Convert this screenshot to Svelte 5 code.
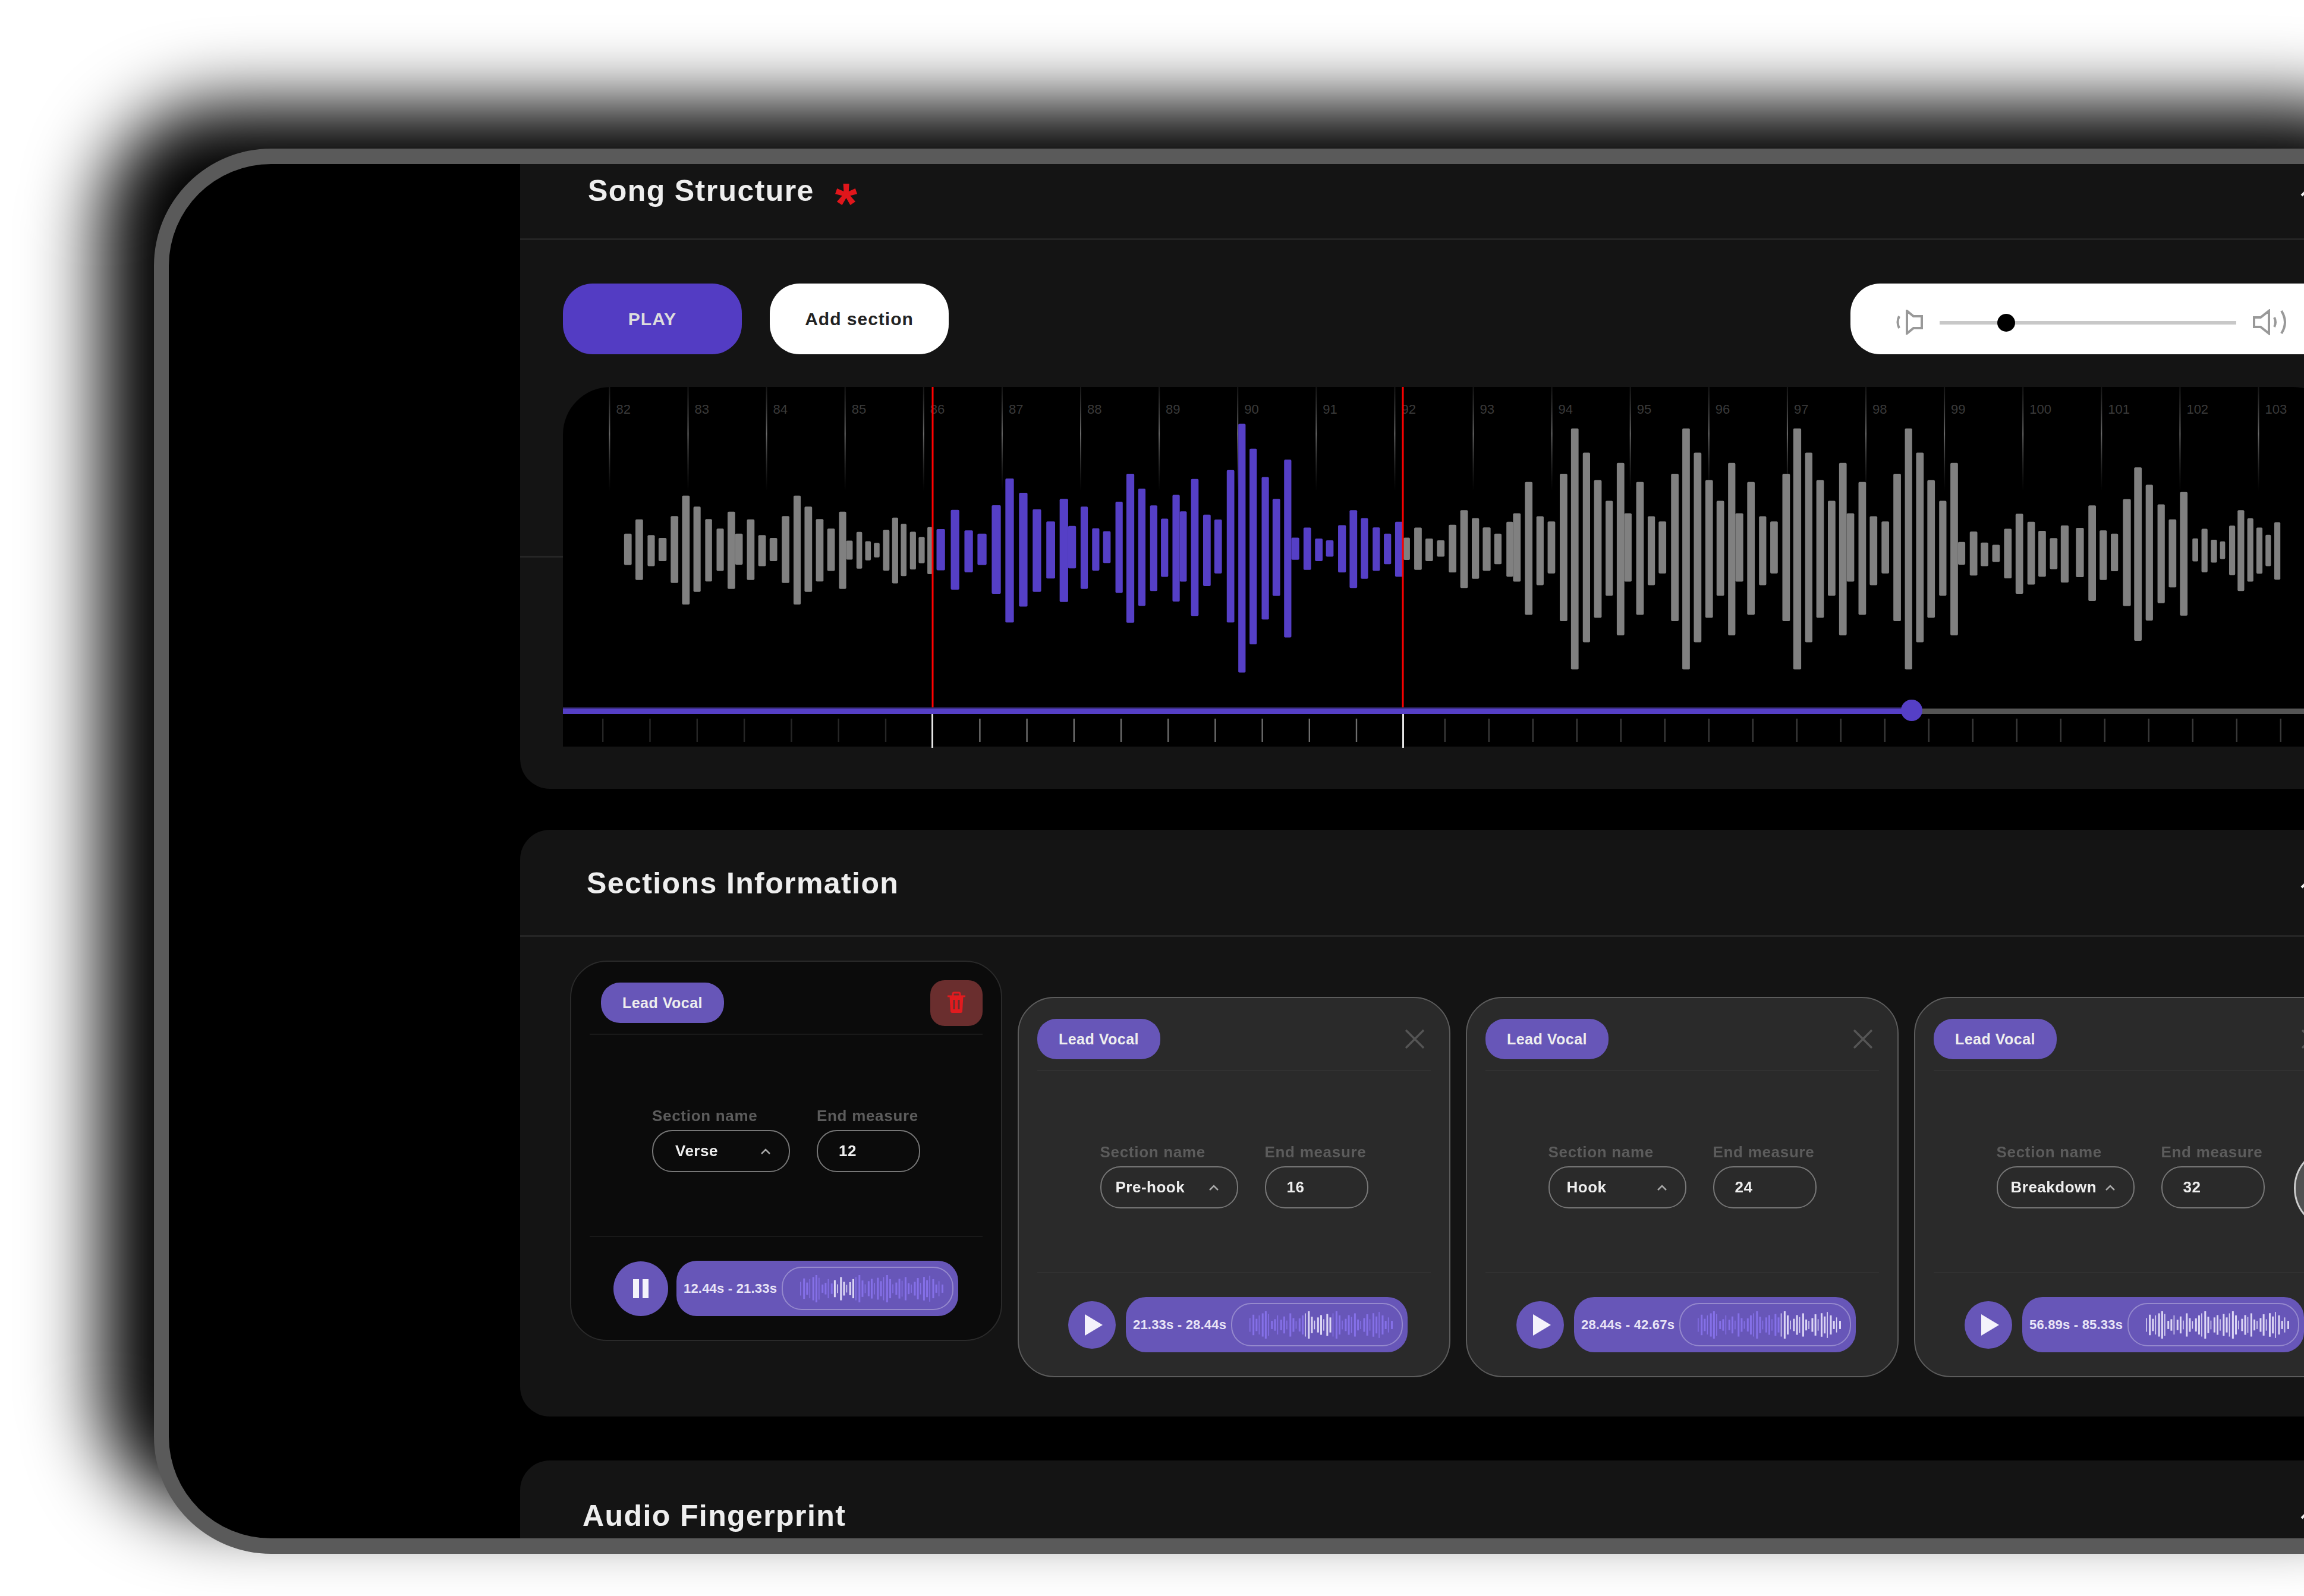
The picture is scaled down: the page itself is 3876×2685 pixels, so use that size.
<script>
  const m2 = (a) => a.map(([l, r, t, b]) => [l / 1.568 + 900, r / 1.568 + 900, t / 2.376 + 620, b / 2.376 + 620]);
  const mz = (ox) => (a) => a.map(([l, r, t, b]) => [l / 1.96 + ox, r / 1.96 + ox, t / 2.529 + 640, b / 2.529 + 640]);
  const gray1 = m2([[235,255,660,785],[265,285,603,845],[297,316,666,790],[326,347,677,770],[358,378,590,857],[388,408,508,943],[418,437,552,893],[449,467,602,851],[479,498,640,809],[508,528,572,881],[528,548,660,784],[559,579,603,845],[589,609,666,790],[619,639,677,770],[651,671,590,857],[682,701,508,943],[711,731,552,893],[741,761,602,851],[771,791,640,809],[802,821,572,881],[821,838,688,764],[848,863,653,800],[871,886,690,767],[894,909,697,755],[918,935,645,808],[942,958,596,859],[965,980,621,830],[989,1005,652,803],[1012,1028,673,778],[1035,1048,634,822]]);
  const purple = [...mz(1500)([[148,176,632,808],[195,223,551,890],[240,268,638,816],[283,313,652,785],[330,360,531,908],[375,403,417,1030],[420,448,478,962],[465,493,548,900],[510,539,600,843],[554,582,504,943],[582,608,619,800],[623,647,537,887],[661,685,629,809],[697,722,642,777],[738,762,516,904],[774,800,397,1031],[813,837,460,959],[852,876,532,896],[888,912,588,836],[926,950,487,941],[950,973,557,856],[987,1012,419,1002],[1027,1052,571,875],[1064,1089,592,821],[1105,1130,381,1030],[1143,1167,184,1243],[1180,1204,290,1123],[1220,1244,411,1017],[1256,1281,504,917],[1294,1318,337,1094],[1318,1344,669,763],[1358,1383,626,806],[1396,1421,673,769],[1432,1457,680,750],[1472,1498,616,817],[1510,1535,552,883],[1547,1571,586,844]]),
    ...mz(2300)([[18,42,625,810],[55,79,652,782],[92,118,601,835]])];
  const gray2 = [...mz(2300)([[120,141,669,764],[155,180,626,806],[192,217,673,769],[230,255,680,750],[269,294,614,817],[307,332,552,883],[345,369,586,844],[381,407,625,810],[419,443,652,782],[459,481,601,835],[481,506,565,856],[520,545,432,997],[558,582,578,871],[595,620,600,821],[635,660,397,1024],[672,697,204,1230],[711,735,307,1114],[748,773,424,1010],[786,810,512,916],[823,848,351,1084],[848,872,565,856],[887,912,432,997],[925,949,578,871],[961,986,600,821],[1002,1027,397,1024],[1039,1064,204,1230],[1077,1102,307,1114],[1115,1140,424,1010],[1152,1177,512,916],[1190,1214,351,1084],[1214,1240,565,856],[1253,1278,432,997],[1292,1316,578,871],[1329,1354,600,821],[1369,1394,397,1024],[1405,1431,204,1230],[1444,1468,307,1114],[1481,1506,424,1010],[1519,1544,512,916]]),
    ...mz(3076)([[35,60,351,1084],[60,85,565,856],[99,124,432,997],[136,161,578,871],[175,200,600,821],[214,239,397,1024],[252,276,204,1230],[289,314,307,1114],[326,351,424,1010],[365,389,512,916],[402,427,351,1084],[427,451,687,784],[466,491,643,830],[502,527,690,790],[540,565,699,772],[579,604,631,842],[617,642,567,908],[656,681,601,869],[692,717,640,835],[730,755,671,803],[766,792,617,860],[816,842,627,837],[857,882,532,938],[894,918,638,849],[931,955,652,812],[971,997,505,960],[1008,1033,370,1108],[1046,1070,444,1022],[1085,1109,527,948],[1122,1147,591,881],[1159,1184,475,1001],[1200,1219,672,770],[1230,1250,631,816],[1261,1281,678,775],[1291,1308,685,760],[1321,1341,618,828],[1349,1371,552,896],[1381,1401,587,856],[1411,1431,626,822],[1441,1459,657,790],[1470,1490,603,848]])];

  const OX = 947, OY = 651;
  const grid = Array.from({ length: 22 }, (_, i) => ({ x: 1024.4 + i * 132.1 - OX, n: 82 + i }));
  const ticks = [];
  for (let i = 0; i < 7; i++) ticks.push({ x: 1013 + i * 79.3 - OX, c: '#262626' });
  for (let i = 1; i < 10; i++) ticks.push({ x: 1568 + i * 79.2 - OX, c: '#6e6e6e' });
  for (let i = 0; i < 20; i++) ticks.push({ x: 2429.6 + i * 74 - OX, c: '#3a3a3a' });

  const pattern = [.5,.75,.45,.7,.85,1,.8,.3,.42,.7,.38,.62,.32,.85,.5,.28,.48,.7,.85,1,.6,.32,.55,.72,.42,.8,.55,.85,1,.7,.32,.45,.72,.58,.85,.4,.3,.5,.78,.42,.86,.62,.95,.7,.3,.55,.3];
  const miniW = 242, miniH = 46;
  const miniBars = (from, to, all) => pattern.map((h, i) => {
    const p = i / (pattern.length - 1);
    return { x: p * (miniW - 4), h: h * miniH, lit: all || (p >= from && p <= to), thin: i % 3 === 0 };
  });

  const sections = [
    { name: 'Verse', end: '12', time: '12.44s - 21.33s', pad: 37, selected: true, bars: miniBars(.23, .39) },
    { name: 'Pre-hook', end: '16', time: '21.33s - 28.44s', pad: 24, bars: miniBars(.38, .58) },
    { name: 'Hook', end: '24', time: '28.44s - 42.67s', pad: 29, bars: miniBars(.58, 1) },
    { name: 'Breakdown', end: '32', time: '56.89s - 85.33s', pad: 22, knob: true, bars: miniBars(0, 1, true) }
  ];
</script>

<div class="page">
  <div class="device">
    <div class="side"></div>
    <main class="column">
      <section class="panel first">
        <header class="head short">
          <h2 class="title t1">Song Structure</h2>
          <span class="star">*</span>
          <svg class="fold" viewBox="0 0 40 24"><path d="M4 20 20 4l16 16" /></svg>
        </header>
        <div class="controls">
          <button class="btn play">PLAY</button>
          <button class="btn add">Add section</button>
          <div class="volume">
            <svg class="vol-low" viewBox="0 0 46 42"><path d="M6 11Q1 21 6 31" /><path d="M19 2V40L30 31H44V11H30Z" /></svg>
            <div class="vol-track"><span class="vol-thumb"></span></div>
            <svg class="vol-high" viewBox="0 0 60 44"><path d="M2 14H13L27 3V41L13 30H2Z" /><path d="M36 14Q40 22 36 30" /><path d="M48 3Q60 22 48 41" /></svg>
          </div>
        </div>
        <div class="rule"></div>
        <div class="wave">
          <svg class="wave-svg" width="2991" height="605" viewBox="0 0 2991 605">
            <defs>
              <linearGradient id="gridFade" x1="0" y1="0" x2="0" y2="1">
                <stop offset="0" stop-color="#555" stop-opacity=".25" />
                <stop offset=".45" stop-color="#777" stop-opacity=".9" />
                <stop offset="1" stop-color="#444" stop-opacity="0" />
              </linearGradient>
            </defs>
            {#each grid as g}
              <rect x={g.x} y="0" width="2" height="175" fill="url(#gridFade)" />
              <text class="measure" x={g.x + 12} y="45">{g.n}</text>
            {/each}
            {#each [...gray1, ...gray2] as b}
              <rect x={b[0] - OX} y={b[2] - OY} width={b[1] - b[0]} height={b[3] - b[2]} rx="2" fill="#808080" />
            {/each}
            {#each purple as b}
              <rect x={b[0] - OX} y={b[2] - OY} width={b[1] - b[0]} height={b[3] - b[2]} rx="2" fill="#553fc6" />
            {/each}
            <rect x="620.5" y="0" width="3" height="541" fill="#ff0000" />
            <rect x="1411.5" y="0" width="3" height="541" fill="#ff0000" />
            <rect x="0" y="541" width="2991" height="9" fill="#555" />
            <rect x="0" y="539" width="2269" height="3" fill="#2d2460" />
            <rect x="0" y="541" width="2269" height="9" fill="#553fc6" />
            <circle cx="2269" cy="544" r="18" fill="#553fc6" />
            {#each ticks as t}
              <rect x={t.x} y="558" width="2.4" height="39" fill={t.c} />
            {/each}
            <rect x="620" y="550" width="3" height="57" fill="#e4e4e4" />
            <rect x="1412" y="550" width="3" height="57" fill="#e4e4e4" />
          </svg>
        </div>
      </section>

      <section class="panel">
        <header class="head">
          <h2 class="title t2">Sections Information</h2>
          <svg class="fold" viewBox="0 0 40 24"><path d="M4 20 20 4l16 16" /></svg>
        </header>
        <div class="cards">
          {#each sections as s}
            <article class="card" class:selected={s.selected}>
              <div class="card-head">
                <span class="tag">Lead Vocal</span>
                {#if s.selected}
                  <button class="trash" aria-label="Delete">
                    <svg viewBox="0 0 34 38"><path class="lid" d="M2 8H32M11 7V4Q11 2 13 2H21Q23 2 23 4V7" /><path class="bin" d="M5.5 8H28.5L27 33Q27 36 24 36H10Q7 36 7 33Z" /><path class="slit" d="M13 14V30M21 14V30" /></svg>
                  </button>
                {:else}
                  <svg class="close" viewBox="0 0 34 34"><path d="M2 2 32 32M32 2 2 32" /></svg>
                {/if}
              </div>
              <div class="card-body">
                <div class="field">
                  <span class="label">Section name</span>
                  <div class="select">
                    <span class="value" style="padding-left:{s.pad}px">{s.name}</span>
                    <svg class="caret" viewBox="0 0 18 12"><path d="M2 10 9 3l7 7" /></svg>
                  </div>
                </div>
                <div class="field">
                  <span class="label">End measure</span>
                  <div class="input"><span class="value">{s.end}</span></div>
                </div>
              </div>
              <div class="card-foot">
                <button class="round" aria-label={s.selected ? 'Pause' : 'Play'}>
                  {#if s.selected}
                    <svg class="pause" viewBox="0 0 26 32"><path d="M0 0H10V32H0ZM16 0H26V32H16Z" /></svg>
                  {:else}
                    <svg class="tri" viewBox="0 0 30 36"><path d="M0 0 30 18 0 36Z" /></svg>
                  {/if}
                </button>
                <div class="clip">
                  <span class="time">{s.time}</span>
                  <div class="clip-wave">
                    <svg width={miniW} height={miniH} viewBox="0 0 {miniW} {miniH}">
                      {#each s.bars as b}
                        <rect x={b.x} y={(miniH - b.h) / 2} width={b.thin ? 1.6 : 3} height={b.h} fill={b.lit ? '#dcd6f4' : '#8570e8'} />
                      {/each}
                    </svg>
                  </div>
                </div>
              </div>
              {#if s.knob}<span class="knob"></span>{/if}
            </article>
          {/each}
        </div>
      </section>

      <section class="panel last">
        <header class="head">
          <h2 class="title t3">Audio Fingerprint</h2>
          <svg class="fold" viewBox="0 0 40 24"><path d="M4 20 20 4l16 16" /></svg>
        </header>
      </section>
    </main>
  </div>
</div>

<style>
  :global(body) { margin: 0; background: #fff; }
  .page { width: 3876px; height: 2685px; overflow: hidden; padding: 250px 0 0 259px; box-sizing: border-box; font-family: "Liberation Sans", Arial, sans-serif; }
  .device { width: 3900px; height: 2364px; box-sizing: border-box; display: flex; overflow: hidden; background: #000; border: 26px solid #5a5a5a; border-left-width: 25px; border-radius: 197px; box-shadow: -86px -72px 124px 3px #000; }
  .side { width: 591px; flex: none; }
  .column { flex: none; width: 3135px; display: flex; flex-direction: column; gap: 69px; filter: blur(0.7px); }
  .panel { background: #141414; border-radius: 50px; flex: none; }
  .first { border-radius: 0 0 50px 50px; padding-bottom: 71px; position: relative; }
  .last { margin-top: 5px; }
  .head { height: 180px; box-sizing: border-box; display: flex; align-items: center; border-bottom: 3px solid #252525; padding-right: 102px; }
  .short { height: 128px; padding-bottom: 36px; }
  .title { margin: 0; color: #eee; font-size: 50px; font-weight: 700; letter-spacing: 1.4px; white-space: nowrap; }
  .t1 { margin-left: 114px; }
  .t2 { margin-left: 112px; margin-top: 2px; }
  .t3 { margin-left: 105px; margin-top: 8px; }
  .star { color: #e0161b; font-size: 96px; font-weight: 700; line-height: 1; margin-left: 35px; transform: translateY(21px); }
  .fold { width: 40px; height: 24px; margin-left: auto; }
  .fold path { fill: none; stroke: #eee; stroke-width: 4; }
  .controls { display: flex; gap: 47px; padding: 73px 72px 0; }
  .btn { width: 301px; height: 119px; border: 0; border-radius: 50px; font: 700 30px "Liberation Sans", Arial, sans-serif; letter-spacing: 1px; }
  .play { background: #533cc3; color: #ddd; }
  .add { background: #fff; color: #222; }
  .volume { margin-left: auto; width: 825px; height: 119px; box-sizing: border-box; padding-left: 76px; background: #fff; border-radius: 50px; display: flex; align-items: center; }
  .volume svg path { fill: none; stroke: #999; stroke-width: 4; }
  .vol-low { width: 46px; height: 42px; flex: none; transform: translateY(5px); }
  .vol-high { width: 60px; height: 44px; flex: none; margin-left: 28px; transform: translateY(5px); }
  .vol-track { width: 499px; height: 6px; margin-left: 28px; background: #c8c8c8; position: relative; transform: translateY(6px); }
  .vol-thumb { position: absolute; left: 97px; top: -12px; width: 30px; height: 30px; border-radius: 50%; background: #000; }
  .rule { position: absolute; left: 0; top: 659px; width: 72px; height: 3px; background: #262626; }
  .wave { margin: 55px 72px 0; height: 605px; background: #000; border-radius: 80px 80px 0 0; }
  .wave-svg { display: block; overflow: visible; }
  .measure { fill: #3a3a3a; font-size: 22px; }
  .cards { display: flex; gap: 26px; padding: 101px 0 66px 84px; }
  .card { flex: none; position: relative; width: 728px; height: 640px; box-sizing: border-box; background: #2a2a2a; border: 2px solid #5c5c5c; border-radius: 62px; display: flex; flex-direction: column; }
  .card.selected { width: 727px; background: #0b0b0b; border-color: #2a2a2a; transform: translateY(-61px); }
  .card-head { height: 123px; margin: 0 31px; box-sizing: border-box; flex: none; display: flex; align-items: center; justify-content: space-between; border-bottom: 2px solid #313131; padding-top: 17px; }
  .selected .card-head { border-bottom-color: #191919; }
  .tag { width: 207px; height: 68px; display: flex; align-items: center; justify-content: center; background: #6756b8; border-radius: 32px; color: #eee; font-size: 25px; font-weight: 700; letter-spacing: .5px; }
  .selected .tag { margin-left: 19px; }
  .trash { width: 88px; height: 77px; padding: 0; border: 0; border-radius: 24px; background: #6a2e2e; display: flex; align-items: center; justify-content: center; }
  .trash svg { width: 34px; height: 38px; }
  .lid { fill: none; stroke: #e01b1f; stroke-width: 3; }
  .bin { fill: #e01b1f; }
  .slit { fill: none; stroke: #6a2e2e; stroke-width: 3; }
  .close { width: 34px; height: 34px; margin-right: 10px; }
  .close path { fill: none; stroke: #555; stroke-width: 3.5; }
  .card-body { height: 340px; flex: none; box-sizing: border-box; padding-top: 14px; display: flex; align-items: center; justify-content: center; gap: 45px; border-bottom: 2px solid #313131; margin: 0 31px; }
  .selected .card-body { border-bottom-color: #191919; }
  .field { display: flex; flex-direction: column; gap: 9px; }
  .label { color: #5c5c5c; font-size: 26px; font-weight: 700; letter-spacing: .7px; line-height: 30px; white-space: nowrap; }
  .select, .input { height: 71px; box-sizing: border-box; border: 2px solid #777; border-radius: 34px; display: flex; align-items: center; }
  .select { width: 232px; justify-content: space-between; padding-right: 30px; }
  .input { width: 174px; padding-left: 35px; }
  .value { color: #eee; font-size: 26px; font-weight: 700; letter-spacing: .5px; }
  .caret { width: 18px; height: 12px; flex: none; }
  .caret path { fill: none; stroke: #aaa; stroke-width: 2.5; }
  .card-foot { flex: 1; display: flex; align-items: center; gap: 17px; padding-left: 83px; }
  .selected .card-foot { padding-left: 71px; gap: 14px; }
  .round { flex: none; width: 80px; height: 80px; padding: 0; border: 0; border-radius: 50%; background: #6756b8; display: flex; align-items: center; justify-content: center; }
  .selected .round { width: 92px; height: 92px; }
  .pause { width: 26px; height: 32px; }
  .tri { width: 30px; height: 36px; margin-left: 6px; }
  .pause path, .tri path { fill: #f4f2fb; }
  .clip { flex: none; width: 474px; height: 93px; box-sizing: border-box; padding: 0 8px 0 12px; background: #6756b8; border-radius: 34px; display: flex; align-items: center; justify-content: space-between; }
  .time { color: #e8e4f6; font-size: 22px; font-weight: 700; letter-spacing: .2px; white-space: nowrap; }
  .clip-wave { flex: none; width: 289px; height: 73px; box-sizing: border-box; border: 2px solid rgba(255, 255, 255, .3); border-radius: 34px; display: flex; align-items: center; justify-content: flex-end; padding-right: 14px; }
  .knob { position: absolute; left: 637px; top: 250px; width: 140px; height: 140px; box-sizing: border-box; border-radius: 50%; background: #505050; border: 3px solid #ccc; }
</style>
